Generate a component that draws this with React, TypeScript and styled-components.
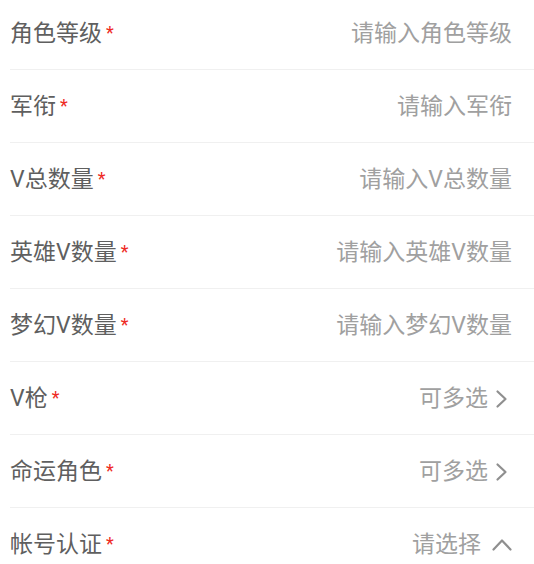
import React from "react"
import styled, { createGlobalStyle } from "styled-components"

const GlobalStyle = createGlobalStyle`
    html, body {
        margin: 0;
        padding: 0;
        background: #ffffff;
    }
    body {
        font-family: Roboto, "Noto Sans CJK SC", sans-serif;
        overflow: hidden;
    }
`

const Form = styled.div`
    width: 534px;
    margin-top: -3px;
    background: #ffffff;
`

const Row = styled.div`
    display: flex;
    align-items: center;
    height: 72px;
    margin-left: 10px;
    padding-right: 22px;
    border-bottom: 1px solid #f0f0f0;
`

const Label = styled.div`
    display: flex;
    align-items: center;
    flex-shrink: 0;
    padding-top: 2px;
    font-size: 23px;
    line-height: 32px;
    color: #5f5f5f;
`

const Required = styled.span`
    margin-left: 4px;
    margin-bottom: 3px;
    font-size: 18px;
    line-height: 18px;
    color: #ee2a24;
`

const Value = styled.div`
    flex: 1;
    display: flex;
    align-items: center;
    justify-content: flex-end;
    padding-top: 2px;
    font-size: 23px;
    line-height: 32px;
    color: #a0a0a0;
`

const Arrow = styled.svg<{ $gap: number }>`
    display: block;
    width: 20px;
    height: 20px;
    margin-left: ${(p) => p.$gap}px;
    flex-shrink: 0;
`

type Field = {
    label: string
    value: string
    icon?: "right" | "up"
}

const fields: Field[] = [
    { label: "角色等级", value: "请输入角色等级" },
    { label: "军衔", value: "请输入军衔" },
    { label: "V总数量", value: "请输入V总数量" },
    { label: "英雄V数量", value: "请输入英雄V数量" },
    { label: "梦幻V数量", value: "请输入梦幻V数量" },
    { label: "V枪", value: "可多选", icon: "right" },
    { label: "命运角色", value: "可多选", icon: "right" },
    { label: "帐号认证", value: "请选择", icon: "up" },
]

const RightIcon = () => (
    <Arrow $gap={4} viewBox="0 0 20 20" fill="none">
        <path d="M5.5 2.5 L13.5 10 L5.5 17.5" stroke="#8f8f8f" strokeWidth="2.2" strokeLinecap="round" strokeLinejoin="round" />
    </Arrow>
)

const UpIcon = () => (
    <Arrow $gap={11} viewBox="0 0 20 20" fill="none">
        <path d="M1.5 14.5 L10 5.5 L18.5 14.5" stroke="#8f8f8f" strokeWidth="2.2" strokeLinecap="round" strokeLinejoin="round" />
    </Arrow>
)

const App: React.FC = () => {
    return (
        <>
            <GlobalStyle />
            <Form>
                {fields.map((f) => (
                    <Row key={f.label}>
                        <Label>
                            {f.label}
                            <Required>*</Required>
                        </Label>
                        <Value>
                            {f.value}
                            {f.icon === "right" && <RightIcon />}
                            {f.icon === "up" && <UpIcon />}
                        </Value>
                    </Row>
                ))}
            </Form>
        </>
    )
}

export default App
